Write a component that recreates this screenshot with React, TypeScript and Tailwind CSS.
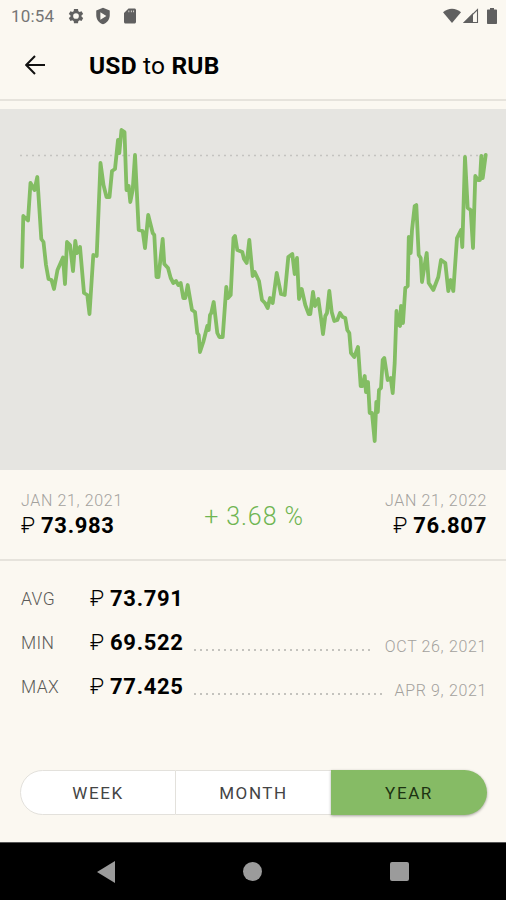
import { clsx } from "clsx";

interface Stat { label: string; value: string; date?: string }

const stats: Stat[] = [
  { label: "AVG", value: "73.791" },
  { label: "MIN", value: "69.522", date: "OCT 26, 2021" },
  { label: "MAX", value: "77.425", date: "APR 9, 2021" },
];

const periods = ["WEEK", "MONTH", "YEAR"];

// rate history, x/y in chart pixels
const points = [
  [22, 157], [23.3, 106], [28, 110.5], [30.5, 73], [34.5, 80], [37.3, 67], [41.3, 129], [43.5, 132], [46, 155], [48.5, 169],
  [51.5, 170], [54, 179], [57.5, 160], [63, 147.5], [65, 174], [67, 132], [70, 135], [73, 161], [75.3, 131], [77, 143],
  [80, 137], [84, 183], [87.3, 185], [89.5, 204], [93.3, 145], [96.7, 146], [100.5, 53], [103.5, 75], [106.5, 87], [109.5, 87],
  [112, 61], [115, 59], [118, 30], [119.3, 43], [121.5, 20], [124.5, 22], [126.5, 80], [128.7, 76], [130.3, 92], [132.7, 80],
  [135, 45], [138.7, 120], [142.7, 121], [145, 138], [148.2, 105], [152.7, 123], [154.3, 125], [156.5, 167], [158.5, 167], [162.7, 129],
  [164.3, 154], [168, 158], [170.7, 168], [173.3, 173], [176, 171], [178.3, 175], [180.7, 173], [183.3, 188], [185.3, 188], [187.7, 175],
  [192, 200], [195, 202], [197.3, 223], [198.7, 225], [200, 242], [203.3, 232], [207.3, 216], [208.7, 220], [210, 205], [211.3, 203],
  [213.7, 192], [217.3, 223], [219.3, 227], [222.7, 227], [226.3, 177], [228, 188], [230.7, 185], [233.5, 128], [235, 126], [237.3, 140],
  [242.3, 142], [244, 149], [246.7, 153], [249.3, 130], [252.7, 166], [254.7, 162], [259, 171], [262, 190], [265, 193], [267.7, 198],
  [270, 188], [272.7, 193], [276.7, 163], [281, 184], [284.7, 185], [288.3, 147], [292.3, 144], [294.7, 164], [297, 148], [299, 189],
  [301.7, 179], [305.3, 195], [308.7, 204], [310.3, 204], [313, 182], [315, 196], [318.3, 189], [321, 208], [323, 224], [325.3, 206],
  [327, 203], [329.3, 181], [331.7, 202], [334.3, 211], [337.3, 210], [340, 203], [342.7, 207], [345.3, 208], [347.3, 220], [349.3, 223],
  [351, 243], [354.3, 247], [358, 237], [360.7, 276], [362.5, 276], [364.7, 266], [366, 282], [368, 272], [369.7, 303], [372, 303],
  [374.7, 331], [376.3, 292], [377.8, 302], [379, 280], [381, 278], [382.7, 250], [384.3, 248], [387.7, 270], [390.7, 268], [392.7, 283],
  [394.7, 253], [396.5, 201], [398, 214], [400, 216], [401, 196], [403, 213], [405.3, 178], [407.7, 176], [408.8, 127], [410.7, 143],
  [412, 120], [414.7, 96], [416.3, 95], [418.7, 145], [420.7, 148], [422, 172], [424.5, 156], [426.7, 143], [428.7, 173], [433.3, 180],
  [438.3, 167], [441, 150], [445.3, 153], [448.3, 181], [450.7, 170], [453.3, 181], [457, 128], [461, 120], [462.3, 137], [465, 47],
  [467.7, 98], [470.7, 100], [473, 138], [475.3, 66], [478, 70], [480, 70], [481.3, 46], [482.7, 68], [485.7, 45],
];

function StatusBar() {
  return (
    <div className="flex h-[30px] shrink-0 items-center pt-0.5 pr-[9px] pl-[11px] text-[#606060]">
      <span className="w-[43px] text-[17px] leading-none tracking-[0.2px] text-[#757575]">10:54</span>
      <svg className="ml-[13px]" width="18" height="18" viewBox="0 0 24 24" fill="currentColor">
        <path fillRule="evenodd" d="M19.4 13a7.5 7.5 0 0 0 0-2l2.2-1.7-2.2-3.8-2.6 1a8 8 0 0 0-1.7-1L14.7 2.5H9.3L8.9 5.5a8 8 0 0 0-1.7 1l-2.6-1-2.2 3.8L4.6 11a7.5 7.5 0 0 0 0 2l-2.2 1.7 2.2 3.8 2.6-1a8 8 0 0 0 1.7 1l.4 3h5.4l.4-3a8 8 0 0 0 1.7-1l2.6 1 2.2-3.8zM12 15.8a3.8 3.8 0 1 1 0-7.6 3.8 3.8 0 0 1 0 7.6z" />
      </svg>
      <svg className="ml-[9px]" width="18" height="18" viewBox="0 0 24 24" fill="currentColor">
        <path fillRule="evenodd" d="M12 1 3 4.5V11c0 5.8 3.8 10.5 9 12 5.2-1.5 9-6.2 9-12V4.5zM8.5 7v10l8-5z" />
      </svg>
      <svg className="ml-[9px]" width="18" height="18" viewBox="0 0 24 24" fill="currentColor">
        <path fillRule="evenodd" d="M18 2h-8L4 8v12c0 1.1.9 2 2 2h12c1.1 0 2-.9 2-2V4c0-1.1-.9-2-2-2zM10 4.5h1v2.5h-1zm3.2 0h1v2.5h-1zm3.2 0h1v2.5h-1z" />
      </svg>
      <svg className="ml-auto" width="18" height="16" viewBox="0 0 18 16" fill="currentColor">
        <path d="M0 4.2C5-.5 13-.5 18 4.2L9 15z" />
      </svg>
      <svg className="ml-[2px]" width="16" height="16" viewBox="0 0 16 16">
        <path fill="currentColor" d="M0 15 10 5v10z" />
        <path fill="none" stroke="currentColor" strokeWidth="1.1" d="M1.5 14.5 14.5 1.5v13z" />
      </svg>
      <svg className="ml-[8px]" width="10" height="16" viewBox="0 0 10 16" fill="currentColor">
        <path d="M3 0h4v1.5h2c.6 0 1 .4 1 1V15c0 .6-.4 1-1 1H1c-.6 0-1-.4-1-1V2.5c0-.6.4-1 1-1h2z" />
      </svg>
    </div>
  );
}

function Price({ value }: { value: string }) {
  return (
    <span className="flex text-[22px] leading-[26px] whitespace-pre text-black">
      <span className="w-5 font-light">₽</span>
      <span className="font-bold tracking-[0.7px]">{value}</span>
    </span>
  );
}

function Chart() {
  return (
    <div className="h-[361px] shrink-0 bg-[#e6e5e1] pt-px">
      <svg width="506" height="360" viewBox="0 0 506 360" fill="none">
        <path d="M20 45.5H486" stroke="#c4c3c0" strokeWidth="1.5" strokeDasharray="2 4" />
        <polyline
          points={points.map((p) => p.join(",")).join(" ")}
          stroke="#83bd63"
          strokeWidth="3.8"
          strokeLinecap="round"
          strokeLinejoin="round"
        />
      </svg>
    </div>
  );
}

export default function App() {
  return (
    <div className="flex h-[900px] w-[506px] flex-col overflow-hidden bg-[#fbf8f1] font-[Roboto,sans-serif]">
      <StatusBar />

      <header className="flex h-[71px] shrink-0 items-center border-b-2 border-[#e6e3dc] pl-[25px]">
        <svg width="20" height="20" viewBox="0 0 20 20" fill="none" stroke="#111" strokeWidth="2">
          <path d="M20 10H1.5M10 1 1.2 10 10 19" />
        </svg>
        <h1 className="mt-0.5 ml-[44px] text-[24.5px] leading-8 font-normal tracking-[0.2px] text-black">
          <b>USD</b> to <b>RUB</b>
        </h1>
      </header>

      <div className="h-2 shrink-0" />
      <Chart />

      <div className="flex h-[91px] shrink-0 items-center justify-between border-b-2 border-[#e6e3dc] pr-[19px] pl-[21px]">
        <div className="flex flex-col">
          <span className="text-[16px] leading-[22px] font-light tracking-[0.65px] text-[#a3a19d]">JAN 21, 2021</span>
          <span className="pt-px"><Price value="73.983" /></span>
        </div>
        <span className="pt-1 text-[25px] leading-8 font-light tracking-[0.9px] text-[#6fb552]">+ 3.68 %</span>
        <div className="flex flex-col items-end">
          <span className="text-[16px] leading-[22px] font-light tracking-[0.65px] text-[#a3a19d]">JAN 21, 2022</span>
          <span className="pt-px"><Price value="76.807" /></span>
        </div>
      </div>

      <div className="flex flex-col pt-4 pr-[19px] pl-[21px]">
        {stats.map((s) => (
          <div key={s.label} className="flex h-11 items-center">
            <span className="w-[69px] text-[17.5px] font-light tracking-[0.4px] text-[#5c5b58]">{s.label}</span>
            <Price value={s.value} />
            {s.date && (
              <>
                <svg className="mt-[13px] ml-[9px] h-0.5 min-w-0 flex-1">
                  <line x1="1" y1="1" x2="100%" y2="1" stroke="#b3b1ad" strokeWidth="1.5" strokeDasharray="2 4" />
                </svg>
                <span className="mt-[7px] ml-3 text-[16px] leading-5 font-light tracking-[0.65px] text-[#a3a19d]">{s.date}</span>
              </>
            )}
          </div>
        ))}
      </div>

      <div className="mt-[61px] mr-[19px] ml-5 flex h-[45px] shrink-0">
        {periods.map((p, i) => (
          <button
            key={p}
            className={clsx(
              "pt-0.5 text-[17px] tracking-[1.6px]",
              i === 0 && "w-[156px] rounded-l-full border border-[#e3e1dc]",
              i === 1 && "w-[155px] border-y border-[#e3e1dc]",
              p === "YEAR" ? "flex-1 rounded-r-full bg-[#86bb65] text-[#1d3312] shadow-[0_1px_3px_rgba(0,0,0,0.35)]" : "bg-white text-[#444]"
            )}
          >
            {p}
          </button>
        ))}
      </div>

      <nav className="mt-auto flex h-[58px] shrink-0 items-center justify-between border-t border-[#555] bg-black pr-[97px] pl-[97px] text-[#9b9b9b]">
        <svg width="18" height="22" viewBox="0 0 18 22" fill="currentColor"><path d="M18 0v22L0 11z" /></svg>
        <span className="size-[19px] rounded-full bg-[#9b9b9b]" />
        <span className="size-[19px] rounded-[2px] bg-[#9b9b9b]" />
      </nav>
    </div>
  );
}
